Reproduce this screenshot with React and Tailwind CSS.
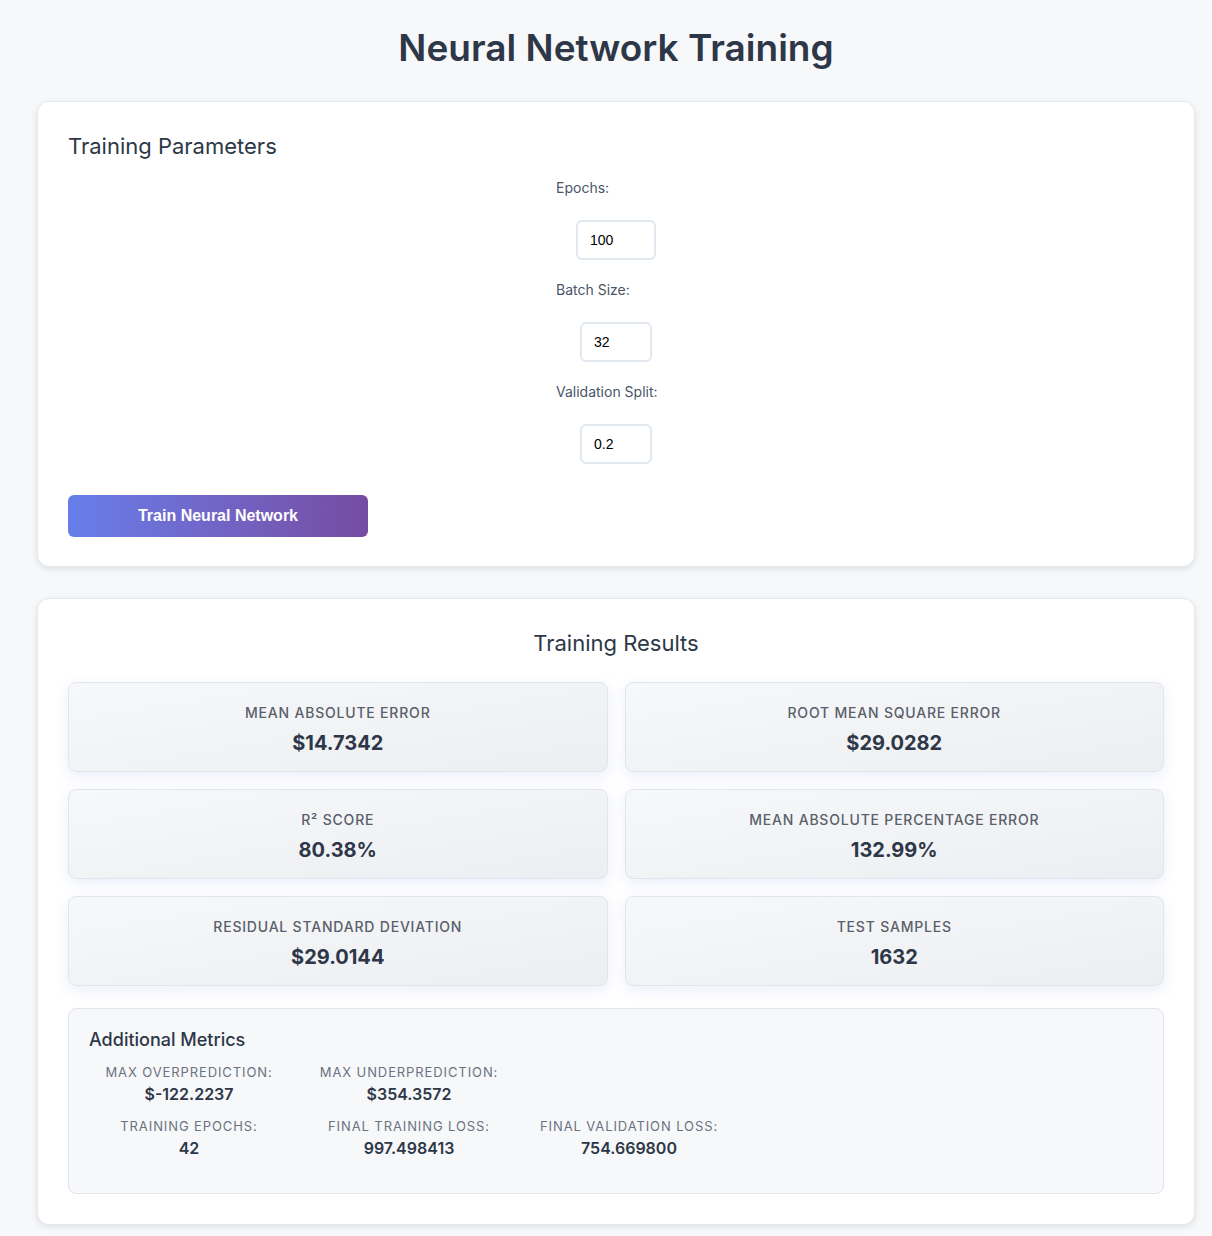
import React from "react";

const font = { fontFamily: "Inter, 'Noto Sans', sans-serif" };

function Field({ label, value, w }) {
  return (
    <div className="flex flex-col items-center">
      <div className="w-[120px] text-[14px] leading-[19px] text-[#4a5568] mb-[23px]">{label}</div>
      <input
        readOnly
        value={value}
        className={`${w} h-10 rounded-md border-2 border-[#e2e8f0] bg-white pl-3 text-[14px] text-black outline-none mb-5`}
        style={{ fontFamily: "'Liberation Sans', Arial, sans-serif" }}
      />
    </div>
  );
}

function Metric({ label, value }) {
  return (
    <div className="rounded-lg border border-[#e2e5ec] bg-gradient-to-br from-[#f7f8fa] to-[#eceef1] pt-5 pb-[14px] text-center shadow-[0_4px_14px_rgba(102,126,234,0.13)]">
      <div className="text-[14px] leading-5 font-medium uppercase tracking-[0.8px] text-[#5a5f6b]">{label}</div>
      <div className="mt-[6px] text-[20px] leading-7 font-bold text-[#2d3748]">{value}</div>
    </div>
  );
}

function Extra({ label, value }) {
  return (
    <div className="w-[200px] text-center">
      <div className="text-[13px] leading-[18px] uppercase tracking-[0.9px] text-[#6b7280]">{label}</div>
      <div className="mt-[2px] text-[16px] leading-[22px] font-semibold text-[#2d3748]">{value}</div>
    </div>
  );
}

export default function App() {
  return (
    <div className="min-h-[1236px] bg-[#f7f8fa] pl-5 pb-8" style={font}>
      <h1 className="pt-[26px] text-center text-[37px] leading-[44px] font-semibold text-[#2d3748] mb-[31px]">
        Neural Network Training
      </h1>
      <div className="mx-auto w-[1158px]">
        <div className="rounded-xl border border-[#e5e9ef] bg-white px-[30px] pt-[29px] pb-[29px] shadow-[0_2px_6px_rgba(0,0,0,0.1)]">
          <h2 className="text-[22px] leading-[30px] font-normal text-[#2d3748] mb-[17px]">Training Parameters</h2>
          <Field label="Epochs:" value="100" w="w-20" />
          <Field label="Batch Size:" value="32" w="w-[72px]" />
          <Field label="Validation Split:" value="0.2" w="w-[72px]" />
          <button
            className="mt-[11px] block h-[42px] w-[300px] rounded-md bg-gradient-to-r from-[#667eea] to-[#764ba2] text-[16px] font-bold text-white"
            style={{ fontFamily: "'Liberation Sans', Arial, sans-serif" }}
          >
            Train Neural Network
          </button>
        </div>

        <div className="mt-[31px] rounded-xl border border-[#e5e9ef] bg-white px-[30px] pt-[29px] pb-[30px] shadow-[0_2px_6px_rgba(0,0,0,0.1)]">
          <h2 className="text-center text-[22px] leading-[30px] font-normal text-[#2d3748] mb-6">Training Results</h2>
          <div className="grid grid-cols-2 gap-x-[17px] gap-y-[17px]">
            <Metric label="Mean Absolute Error" value="$14.7342" />
            <Metric label="Root Mean Square Error" value="$29.0282" />
            <Metric label="R² Score" value="80.38%" />
            <Metric label="Mean Absolute Percentage Error" value="132.99%" />
            <Metric label="Residual Standard Deviation" value="$29.0144" />
            <Metric label="Test Samples" value="1632" />
          </div>
          <div className="mt-[22px] rounded-lg border border-[#e2e5ec] bg-[#f7f8fa] px-5 pt-5 pb-[34px]">
            <h3 className="text-[18px] leading-[22px] font-medium text-[#2d3748]">Additional Metrics</h3>
            <div className="mt-3 flex gap-5">
              <Extra label="Max Overprediction:" value="$-122.2237" />
              <Extra label="Max Underprediction:" value="$354.3572" />
            </div>
            <div className="mt-3 flex gap-5">
              <Extra label="Training Epochs:" value="42" />
              <Extra label="Final Training Loss:" value="997.498413" />
              <Extra label="Final Validation Loss:" value="754.669800" />
            </div>
          </div>
        </div>
      </div>
    </div>
  );
}
